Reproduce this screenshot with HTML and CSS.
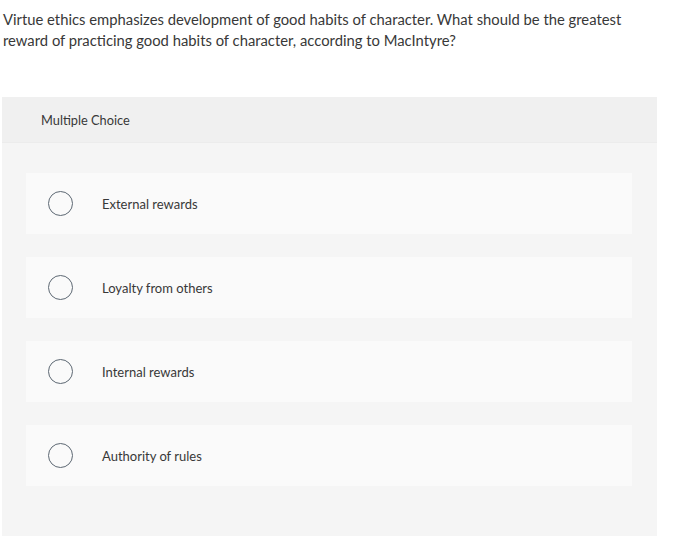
FILE: index.html
```html
<!DOCTYPE html>
<html lang="en">
<head>
  <meta charset="UTF-8" />
  <title>Multiple Choice</title>
  <link rel="stylesheet" href="styles.css">
</head>
<body>
  <p class="question">Virtue ethics emphasizes development of good habits of character. What should be the greatest reward of practicing good habits of character, according to MacIntyre?</p>

  <div class="panel">
    <div class="panel-header">Multiple Choice</div>
    <div class="choices">
      <label class="choice">
        <span class="radio"></span>
        <span class="choice-text">External rewards</span>
      </label>
      <label class="choice">
        <span class="radio"></span>
        <span class="choice-text">Loyalty from others</span>
      </label>
      <label class="choice">
        <span class="radio"></span>
        <span class="choice-text">Internal rewards</span>
      </label>
      <label class="choice">
        <span class="radio"></span>
        <span class="choice-text">Authority of rules</span>
      </label>
    </div>
  </div>
</body>
</html>
```

FILE: styles.css
```css
body {
  margin: 0;
  padding: 0 2px;
  font-family: Lato, "Open Sans", sans-serif;
  color: #383838;
  background: #fff;
}

.question {
  width: 640px;
  margin: 0;
  padding: 9px 0 0 1px;
  font-size: 14.8px;
  line-height: 21px;
}

.panel {
  width: 655px;
  margin-top: 46px;
  background: #f5f5f5;
  padding-bottom: 50px;
}

.panel-header {
  background: #f0f0f0;
  height: 45px;
  line-height: 46px;
  padding-left: 39px;
  font-size: 12.8px;
  border-bottom: 1px solid #ececec;
}

.choices {
  display: flex;
  flex-direction: column;
  gap: 23px;
  padding: 30px 25px 0 24px;
}

.choice {
  display: flex;
  align-items: center;
  height: 61px;
  background: #fafafa;
  padding-left: 22px;
  cursor: pointer;
}

.radio {
  width: 23px;
  height: 23px;
  border: 1.5px solid #5d6873;
  border-radius: 50%;
  flex-shrink: 0;
}

.choice-text {
  margin-left: 29px;
  font-size: 13px;
}
```
